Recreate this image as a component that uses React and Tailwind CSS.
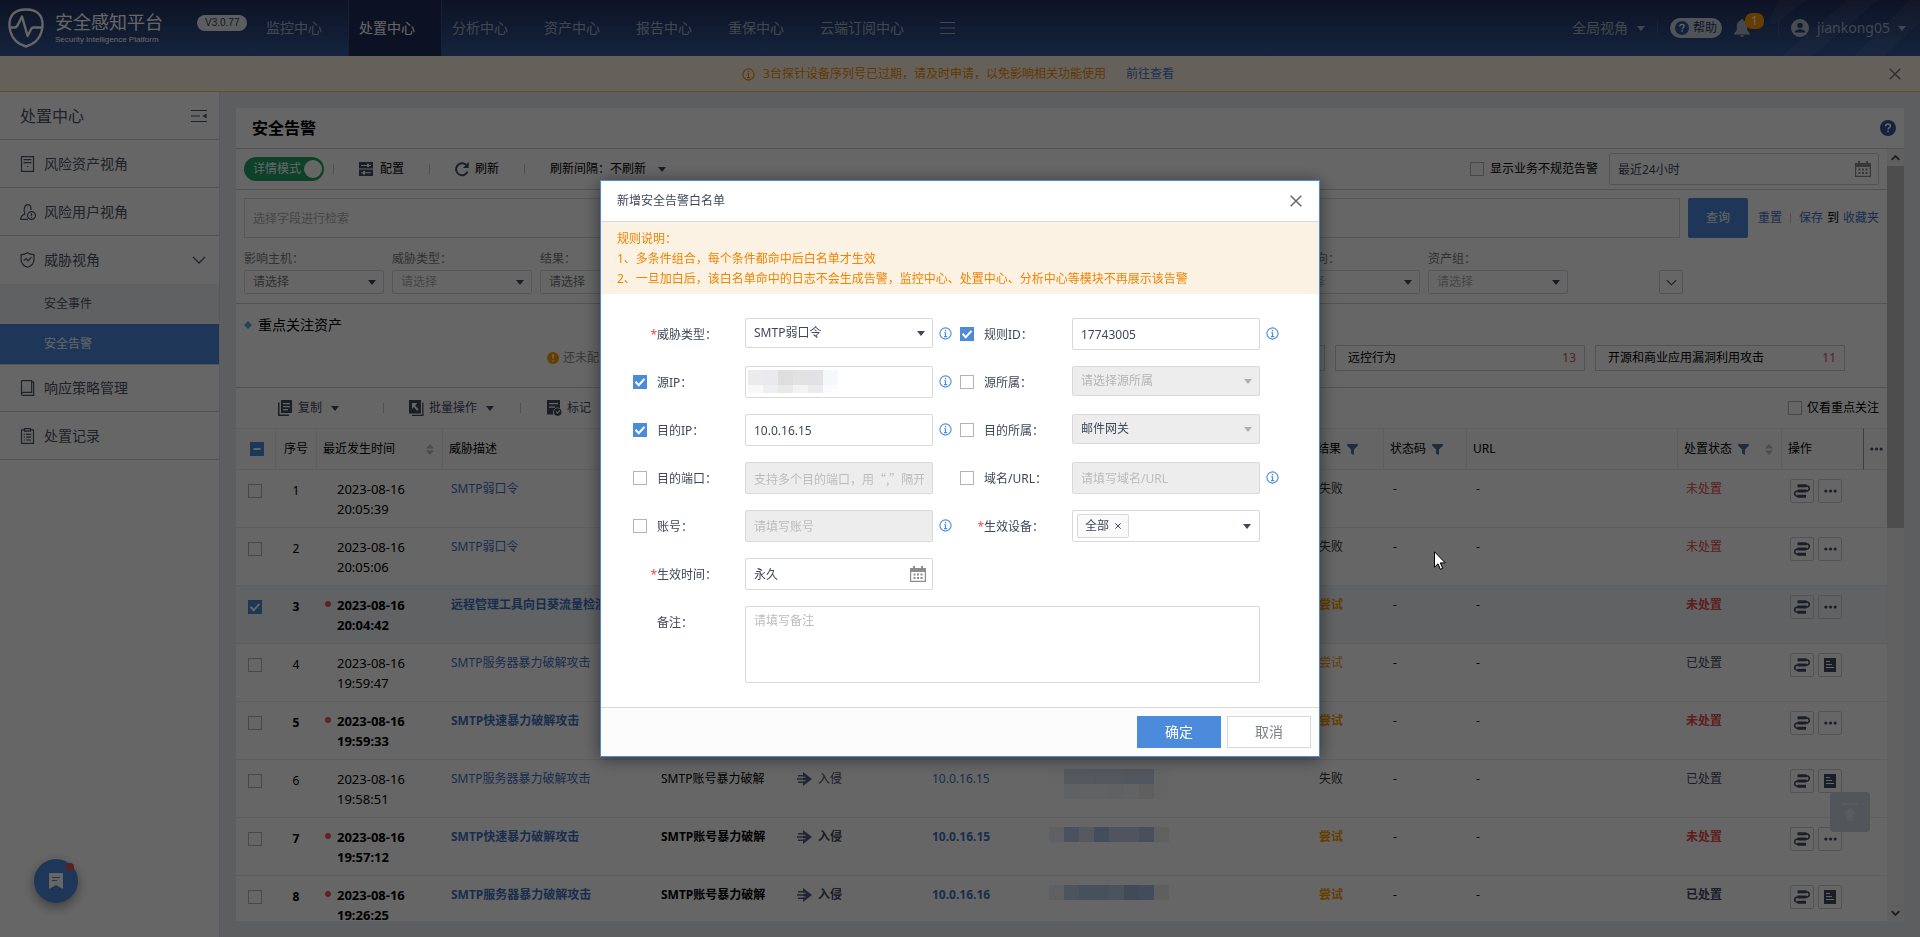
import React from 'react';

const FONT = "font-['Noto_Sans','Noto_Sans_CJK_SC',sans-serif]";

/* ---------- icons ---------- */

const Caret = ({ className = '' }) => (
  <svg viewBox="0 0 8 5" className={`w-2 h-[5px] shrink-0 fill-current ${className}`} aria-hidden="true">
    <path d="M0 0h8L4 5z" />
  </svg>
);

const Chevron = ({ className = '' }) => (
  <svg viewBox="0 0 14 8" className={`fill-none stroke-current ${className}`} strokeWidth="1.3" aria-hidden="true">
    <path d="M1 1l6 6 6-6" />
  </svg>
);

const CloseIcon = ({ className = 'w-3 h-3' }) => (
  <svg viewBox="0 0 12 12" className={`fill-none stroke-current ${className}`} strokeWidth="1.5" aria-hidden="true">
    <path d="M.7.7l10.6 10.6M11.3.7L.7 11.3" />
  </svg>
);

const InfoIcon = ({ className = '' }) => (
  <svg viewBox="0 0 14 14" className={`w-[13px] h-[13px] shrink-0 ${className}`} fill="none" stroke="currentColor" aria-hidden="true">
    <circle cx="7" cy="7" r="6" strokeWidth="1.2" />
    <path d="M5.6 6.2H7v4.2M5.4 10.4h3.4" strokeWidth="1.3" />
    <path d="M6.3 3.1h1.5v1.5H6.3z" fill="currentColor" stroke="none" />
  </svg>
);

const CalendarIcon = () => (
  <svg viewBox="0 0 16 16" className="w-4 h-4 fill-[#8c8c8c]" aria-hidden="true">
    <path d="M0 2h16v14H0zM1.200 6v8.800h13.600V6z" fillRule="evenodd" />
    <path d="M3 0h2v3H3zM11 0h2v3h-2z" />
    <path d="M3.500 7.500h2v2h-2zM7 7.500h2v2H7zM10.500 7.500h2v2h-2zM3.500 11h2v2h-2zM7 11h2v2H7zM10.500 11h2v2h-2z" />
  </svg>
);

const LogoIcon = () => (
  <svg viewBox="0 0 36 40" className="w-9 h-10 shrink-0" fill="none" stroke="#fff" strokeLinejoin="round" aria-hidden="true">
    <path d="M18 1.500c5 0 10 1.300 13 4.500 3.500 4 4.200 11 2.600 17.500C31.500 31.500 25 36.500 18 38.500 11 36.500 4.500 31.500 2.400 23.500.8 17 1.500 10 5 6 8 2.800 13 1.500 18 1.500z" strokeWidth="2.400" />
    <path d="M2.500 19.500h4.500c1.500 0 2-.8 2.600-2.200L14 8.500l5.600 19.500 3.600-7c.6-1.200 1.200-1.500 2.300-1.500H34" strokeWidth="2.400" />
  </svg>
);

const BellIcon = () => (
  <svg viewBox="0 0 16 18" className="w-4 h-[18px] fill-[#a9b4c8]" aria-hidden="true">
    <path d="M8 0c.9 0 1.400.6 1.400 1.400 2.400.7 3.800 2.800 3.800 5.300v4.600l2.800 3.400v.8H0v-.8l2.800-3.400V6.700c0-2.500 1.400-4.600 3.800-5.300C6.600.6 7.100 0 8 0zM6 16.300h4a2 1.700 0 0 1-4 0z" />
  </svg>
);

const UserIcon = () => (
  <svg viewBox="0 0 18 18" className="w-[18px] h-[18px]" aria-hidden="true">
    <circle cx="9" cy="9" r="9" fill="#b3bdcd" />
    <circle cx="9" cy="6.500" r="2.700" fill="#2b447c" />
    <path d="M3.800 13.600c0-2.200 2.400-3.300 5.200-3.300s5.200 1.100 5.200 3.300z" fill="#2b447c" />
  </svg>
);

const QuestionIcon = ({ className = '' }) => (
  <svg viewBox="0 0 16 16" className={className} fill="none" aria-hidden="true">
    <circle cx="8" cy="8" r="8" fill="#34569a" />
    <path d="M5.600 6.300c0-1.500 1-2.400 2.400-2.400s2.400.9 2.400 2.100c0 1.700-2.300 1.700-2.300 3.500" stroke="#fff" strokeWidth="1.500" />
    <path d="M7.200 10.700h1.700v1.600H7.200z" fill="#fff" />
  </svg>
);

const MenuIcon = () => (
  <svg viewBox="0 0 15 12" className="w-[15px] h-3 stroke-current" aria-hidden="true">
    <path d="M0 .5h15M0 6h15M0 11.500h15" />
  </svg>
);

const CollapseIcon = () => (
  <svg viewBox="0 0 16 12" className="w-4 h-3 stroke-current" aria-hidden="true">
    <path d="M0 .5h16M0 6h9M0 11.500h16" strokeWidth="1.200" fill="none" />
    <path d="M15.500 3.600v4.800L11.500 6z" fill="currentColor" stroke="none" />
  </svg>
);

const SideIcon = ({ name }) => (
  <svg viewBox="0 0 16 16" className="w-4 h-4 shrink-0 fill-none stroke-current" strokeWidth="1.200" aria-hidden="true">
    {name === 'asset' && <path d="M1.500.6h12v14.800h-12zM3.500 3.600h8M3.500 6.600h8M7 10.500h1.200" />}
    {name === 'user' && (
      <>
        <path d="M8 15.400H.7c0-3 1.300-4.300 4-5V8.500C3.600 7 4 .7 7.700.7c3.200 0 3.800 3.300 3 5.300" />
        <circle cx="11.500" cy="11.500" r="3.900" />
        <path d="M11.500 9.300v2.600M11.500 12.800v1" />
      </>
    )}
    {name === 'shield' && (
      <>
        <path d="M7.500.7c2 1.400 4 1.900 6.400 1.900V8c0 4-2.900 6-6.400 7.300C4 14 1.100 12 1.100 8V2.600c2.400 0 4.400-.5 6.400-1.900z" />
        <path d="M3.800 8.600l2.400-2 1.900 2.200 3.400-3.600" />
      </>
    )}
    {name === 'book' && <path d="M1.500.6h10.200v11.800H3.300c-1.200 0-1.800.7-1.800 1.500s.6 1.500 1.800 1.500h10.400V2.200h-2M1.500.6v13.300" />}
    {name === 'record' && <path d="M4.500 1.900h-3v13.500h12V1.900h-3M4.500.6h6v2.600h-6zM3.700 6.300h1.200M6 6.300h5.300M3.700 9.200h1.200M6 9.200h5.300M3.700 12h1.200M6 12h5.300" />}
  </svg>
);

const ToolIcon = ({ name }) => (
  <svg viewBox="0 0 15 16" className="w-[15px] h-4 shrink-0 fill-[#434c60]" aria-hidden="true">
    {name === 'config' && (
      <path fillRule="evenodd" d="M0 1h14v6.600H0zM0 8.400h14V15H0zM2 3.900v1h6v1.200h2V4.900h2v-1h-2V2.700H8v1.200zM2 11.200v1h2v1.200h2v-1.200h6v-1H6V10H4v1.200z" />
    )}
    {name === 'refresh' && (
      <>
        <path d="M12.600 10.700A6 6 0 1 1 11 3.700" fill="none" stroke="#434c60" strokeWidth="2" />
        <path d="M13.700.8v6.100H8z" />
      </>
    )}
    {name === 'copy' && (
      <path fillRule="evenodd" d="M3 0h11v13H3zM5 3v1.200h7V3zM5 6v1.200h7V6zM5 9v1.200h5V9zM0 2.500h1.500v12H11V16H0z" />
    )}
    {name === 'batch' && (
      <path fillRule="evenodd" d="M0 0h12v13.500H0zM3 3v6l1.900-1.900 3.300 3.700 1.500-1.400-3.400-3.600L8.200 3zM13.200 2.500h1.300V16H3v-1.300h10.200z" />
    )}
    {name === 'mark' && (
      <>
        <path fillRule="evenodd" d="M0 0h13v8.200a4.700 4.700 0 0 0-6.400 6.300H0zM2 3v1.300h9V3zM2 6.500v1.300h6V6.500z" />
        <path fillRule="evenodd" d="M10.700 8.300a3.800 3.800 0 1 1 0 7.600 3.800 3.800 0 0 1 0-7.600zm-2 3.700l1.700 1.800 3-3.100-.8-.8-2.200 2.300-.9-1z" />
      </>
    )}
  </svg>
);

const FunnelIcon = () => (
  <svg viewBox="0 0 11 11" className="w-[11px] h-[11px] fill-[#52719f]" aria-hidden="true">
    <path d="M0 0h11v1.500L7 5.500V11L4 9.500v-4L0 1.500z" />
  </svg>
);

const SortIcon = () => (
  <svg viewBox="0 0 8 11" className="w-2 h-[11px] fill-[#bdbdbd]" aria-hidden="true">
    <path d="M4 0l4 4.500H0zM4 11L0 6.500h8z" />
  </svg>
);

const FlowIcon = () => (
  <svg viewBox="0 0 16 14" className="w-4 h-[14px] text-[#434c60]" fill="none" stroke="currentColor" aria-hidden="true">
    <path d="M3.500 1.800h9" strokeWidth="3" />
    <path d="M3.500 7h9M3.500 12.300h8.500" strokeWidth="3" />
    <path d="M12 1.800c4.300 0 4.300 5.200 0 5.200M4 7C-.4 7-.4 12.300 4 12.300" strokeWidth="1.500" />
  </svg>
);

const DotsIcon = () => (
  <svg viewBox="0 0 14 4" className="w-[13px] h-1 fill-[#434c60]" aria-hidden="true">
    <circle cx="2" cy="2" r="1.700" />
    <circle cx="7" cy="2" r="1.700" />
    <circle cx="12" cy="2" r="1.700" />
  </svg>
);

const DocIcon = () => (
  <svg viewBox="0 0 12 14" className="w-3 h-[14px]" aria-hidden="true">
    <path d="M0 0h12v14H0z" fill="#434c60" />
    <path d="M2 3.500h4M2 6.500h6M2 9.500h8" stroke="#fff" />
  </svg>
);

const AttackIcon = () => (
  <svg viewBox="0 0 15 14" className="w-[15px] h-[14px] shrink-0" aria-hidden="true">
    <path d="M6 0l9 7-9 7z" fill="#52607f" />
    <path d="M5 5.200h3.500M5 8.800h3.500" stroke="#fff" strokeWidth="1.100" />
    <path d="M1 3.800h5M0 7h6M1 10.200h5" stroke="#52607f" strokeWidth="1.500" />
  </svg>
);

/* ---------- small controls ---------- */

const Check = ({ id, label, checked, mixed, className = '' }) => (
  <span className={`relative inline-block w-[14px] h-[14px] shrink-0 align-top ${className}`}>
    <input
      id={id}
      type="checkbox"
      aria-label={label}
      defaultChecked={checked || mixed}
      className="block w-[14px] h-[14px] appearance-none border border-[#b4b4b4] bg-white checked:bg-[#4c8bdb] checked:border-[#4c8bdb]"
    />
    {(checked || mixed) && (
      <svg viewBox="0 0 14 14" className="absolute inset-0 pointer-events-none" fill="none" stroke="#fff" strokeWidth="2" aria-hidden="true">
        <path d={mixed ? 'M3.500 7h7' : 'M2.500 6.800l3.200 3.400 5.800-6.400'} />
      </svg>
    )}
  </span>
);

const Select = ({ id, label, value, disabled, className = '', color = 'text-[#3f4759]' }) => (
  <span className={`relative block ${className}`}>
    <select
      id={id}
      aria-label={label}
      disabled={disabled}
      className={`block w-full h-full appearance-none rounded-[2px] border border-[#d9d9d9] px-2 text-xs opacity-100 ${
        disabled ? 'bg-[#ededed]' : 'bg-white'
      } ${color}`}
    >
      <option>{value}</option>
    </select>
    <span className={`absolute inset-y-0 right-2 flex items-center pointer-events-none ${disabled ? 'text-[#b0b0b0]' : 'text-[#3f4759]'}`}>
      <Caret />
    </span>
  </span>
);

const Divider = ({ className = '' }) => <span className={`w-px h-[10px] bg-[#c9c9c9] ${className}`} />;

/* ---------- page ---------- */

const navItems = ['监控中心', '处置中心', '分析中心', '资产中心', '报告中心', '重保中心', '云端订阅中心'];

const Header = () => (
  <header className="relative h-14 shrink-0 flex items-stretch bg-gradient-to-b from-[#22305c] to-[#345a9a] text-[#a4b1c8]">
    <svg viewBox="0 0 200 56" className="absolute right-0 top-0 w-[200px] h-14 fill-white/5" aria-hidden="true">
      <path d="M60 0h26L58 22q-8 6-8-4zM128 0h30L92 56H62zM190 0h10v22l-36 34h-30z" />
    </svg>
    <div className="flex items-center pl-2 w-[256px] shrink-0">
      <LogoIcon />
      <div className="ml-[11px] text-white">
        <div className="text-lg leading-6">安全感知平台</div>
        <div className="font-['Liberation_Sans',sans-serif] text-[8px] leading-3 whitespace-nowrap">Security Intelligence Platform</div>
      </div>
      <span className="ml-[34px] mb-[10px] h-4 px-2 rounded-full bg-[#e6e9ee] text-[#333c55] font-['Liberation_Sans',sans-serif] text-[10px] leading-4">
        V3.0.77
      </span>
    </div>
    <nav className="flex text-sm">
      {navItems.map((item) => (
        <a
          key={item}
          href="#"
          className={`flex items-center pl-[10px] pr-[26px] ${
            item === '处置中心' ? 'bg-[#1f2f58] border-x border-[#3a5284] text-white' : ''
          }`}
        >
          {item}
        </a>
      ))}
      <button type="button" aria-label="更多菜单" className="ml-[10px] text-[#a4b1c8]">
        <MenuIcon />
      </button>
    </nav>
    <div className="relative ml-auto flex items-center text-sm pr-[14px]">
      <button type="button" className="flex items-center gap-[9px]">
        全局视角 <Caret />
      </button>
      <span className="ml-3 w-px h-4 bg-[#3c5488]" />
      <button type="button" className="ml-3 h-5 w-[52px] rounded-full bg-[#c8cfdc] text-[#2a3a66] text-xs flex items-center justify-center gap-1">
        <QuestionIcon className="w-[14px] h-[14px]" />
        帮助
      </button>
      <button type="button" aria-label="消息" className="relative ml-3 mr-7">
        <BellIcon />
        <span className="absolute left-[11px] -top-[6px] w-[19px] h-4 rounded-[7px] bg-[#ff9800] text-white text-xs leading-4 text-center">1</span>
      </button>
      <span className="w-px h-4 bg-[#3c5488]" />
      <button type="button" className="ml-3 flex items-center gap-2">
        <UserIcon />
        jiankong05 <Caret />
      </button>
    </div>
  </header>
);

const Notice = () => (
  <div className="relative h-9 shrink-0 flex items-center justify-center pt-px pr-1 bg-[#fff1e0] border-b border-[#f5ce6e] text-xs text-[#f08c00]">
    <InfoIcon />
    <span className="ml-2">3台探针设备序列号已过期，请及时申请，以免影响相关功能使用</span>
    <a href="#" className="ml-5 text-[#3f78cf]">前往查看</a>
    <button type="button" aria-label="关闭提示" className="absolute right-[19px] text-[#777]">
      <CloseIcon />
    </button>
  </div>
);

const SideLink = ({ icon, children, className = '', open }) => (
  <a href="#" className={`h-12 pl-5 pr-[13px] flex items-center text-sm border-[#cfcfcf] ${className}`}>
    <SideIcon name={icon} />
    <span className="ml-2">{children}</span>
    {open && <Chevron className="ml-auto w-[14px] h-2" />}
  </a>
);

const Sidebar = () => (
  <aside className="relative w-[220px] shrink-0 bg-white border-r border-[#dcdfe4] text-[#4d5566]">
    <div className="h-12 pl-5 pr-3 flex items-center justify-between border-b border-[#cfcfcf]">
      <span className="text-base">处置中心</span>
      <CollapseIcon />
    </div>
    <SideLink icon="asset" className="border-b">风险资产视角</SideLink>
    <SideLink icon="user" className="border-b">风险用户视角</SideLink>
    <SideLink icon="shield" open>威胁视角</SideLink>
    <a href="#" className="h-10 pl-[44px] flex items-center text-xs bg-[#f0f2f5]">安全事件</a>
    <a href="#" className="h-10 pl-[44px] flex items-center text-xs bg-[#4c8bdb] text-white">安全告警</a>
    <SideLink icon="book" className="border-y">响应策略管理</SideLink>
    <SideLink icon="record" className="border-b">处置记录</SideLink>
    <button
      type="button"
      aria-label="书签"
      className="absolute left-[34px] bottom-[34px] w-11 h-11 rounded-full bg-[#4c8bdb] shadow-[0_4px_12px_rgba(0,0,0,0.4)] flex items-center justify-center"
    >
      <svg viewBox="0 0 14 16" className="w-[14px] h-4" aria-hidden="true">
        <path d="M0 0h14v16l-7-4-7 4z" fill="#fff" />
        <path d="M3 4.500h8M3 7.500h5" stroke="#4c8bdb" />
      </svg>
      <span className="absolute right-1 top-1 w-2 h-2 rounded-full bg-[#e84c4c]" />
    </button>
  </aside>
);

const filters = [
  ['影响主机', false],
  ['威胁类型', true],
  ['结果', false],
  ['威胁等级', true],
  ['处置状态', true],
  ['攻击阶段', true],
  ['源资产组', true],
  ['访问方向', true],
  ['资产组', true],
];

const FilterArea = () => (
  <section className="px-2 pt-2 pb-[9px] border-b border-[#cfcfcf]">
    <div className="flex items-center text-xs">
      <input
        aria-label="检索条件"
        placeholder="选择字段进行检索"
        className="flex-1 min-w-0 h-10 px-2 border border-[#d9d9d9] placeholder:text-[#b0b0b0]"
      />
      <button type="button" className="ml-2 w-[60px] h-10 rounded-[2px] bg-[#4c8bdb] text-white">查询</button>
      <a href="#" className="ml-[10px] text-[#3f72c4]">重置</a>
      <Divider className="mx-2" />
      <a href="#" className="text-[#3f72c4]">保存</a>
      <span className="mx-1">到</span>
      <a href="#" className="text-[#3f72c4]">收藏夹</a>
    </div>
    <div className="mt-3 flex items-end gap-2">
      {filters.map(([name, muted]) => (
        <label key={name} className="w-[140px] shrink-0 text-xs leading-[18px] text-[#7b7b7b]">
          <span className="block h-5">{name}：</span>
          <Select value="请选择" color={muted ? 'text-[#b0b0b0]' : 'text-[#757575]'} className="h-6" />
        </label>
      ))}
      <button type="button" aria-label="展开" className="ml-[83px] w-6 h-6 border border-[#cfcfcf] rounded-[2px] flex items-center justify-center text-[#444]">
        <Chevron className="w-[11px] h-[7px]" />
      </button>
    </div>
  </section>
);

const FocusAssets = () => (
  <section className="h-[84px] border-b border-[#cfcfcf]">
    <h2 className="h-[41px] pl-2 flex items-center text-sm">
      <svg viewBox="0 0 8 8" className="w-2 h-2 mr-[6px] fill-[#54aee0]" aria-hidden="true">
        <path d="M4 0l4 4-4 4-4-4z" />
      </svg>
      重点关注资产
    </h2>
    <div className="flex items-center justify-between pl-[311px] pr-[42px] text-xs">
      <span className="flex items-center text-[#8b8b8b]">
        <svg viewBox="0 0 12 12" className="w-3 h-3 mr-1" aria-hidden="true">
          <circle cx="6" cy="6" r="6" fill="#ff9c00" />
          <path d="M5 2.200h2l-.4 4.600H5.400zM5.200 8h1.600v1.500H5.200z" fill="#fff" />
        </svg>
        还未配置重点关注资产
      </span>
      <ul className="flex gap-[10px]">
        {[['暴力破解', 25], ['远控行为', 13], ['开源和商业应用漏洞利用攻击', 11]].map(([name, count]) => (
          <li key={name} className="w-[250px] h-[26px] pl-3 pr-2 flex items-center justify-between border border-[#cfcfcf]">
            {name}
            <span className="text-[#e84c4c]">{count}</span>
          </li>
        ))}
      </ul>
    </div>
  </section>
);

const TableTools = () => (
  <div className="h-10 pl-[42px] pr-2 flex items-center text-xs text-[#434c60]">
    <button type="button" className="w-20 flex items-center">
      <ToolIcon name="copy" />
      <span className="ml-[5px] mr-[9px]">复制</span>
      <Caret />
    </button>
    <Divider className="mx-[25px]" />
    <button type="button" className="flex items-center">
      <ToolIcon name="batch" />
      <span className="ml-[5px] mr-[9px]">批量操作</span>
      <Caret />
    </button>
    <Divider className="mx-[26px]" />
    <button type="button" className="flex items-center">
      <ToolIcon name="mark" />
      <span className="ml-[5px]">标记</span>
    </button>
    <label className="ml-auto flex items-center gap-[5px] text-black">
      <Check />
      仅看重点关注
    </label>
  </div>
);

// background tints of the masked host cells, 8 per line
const masks = {
  6: [
    '#fcfcfe', '#d4ddee', '#d4ddee', '#d0daec', '#d0daec', '#cdd6ea', '#cdd6ea', '#fafafa',
    '#ffffff', '#f0f3f5', '#f2f5f7', '#f2f5f7', '#f0f3f5', '#f4f7fa', '#eeeeee', '#fafafa',
  ],
  7: ['#eaeffa', '#bccce8', '#d8e0f0', '#a9c0e4', '#c8d3ea', '#c8d3ea', '#b8c7e4', '#f0f0f0'],
  8: ['#eaeffa', '#c3d3ec', '#b2c8e8', '#b2c8e8', '#bccfea', '#a2bade', '#a8bee2', '#eeeeee'],
};

const rows = [
  { n: 1, time: '20:05:39', name: 'SMTP弱口令', type: '弱口令', ip: '10.0.16.15', result: '失败', state: '未处置' },
  { n: 2, time: '20:05:06', name: 'SMTP弱口令', type: '弱口令', ip: '10.0.16.15', result: '失败', state: '未处置' },
  { n: 3, time: '20:04:42', name: '远程管理工具向日葵流量检测', type: '远控行为', ip: '10.0.16.15', result: '尝试', state: '未处置', bold: true, checked: true },
  { n: 4, time: '19:59:47', name: 'SMTP服务器暴力破解攻击', type: 'SMTP账号暴力破解', ip: '10.0.16.15', result: '尝试', state: '已处置' },
  { n: 5, time: '19:59:33', name: 'SMTP快速暴力破解攻击', type: 'SMTP账号暴力破解', ip: '10.0.16.15', result: '尝试', state: '未处置', bold: true },
  { n: 6, time: '19:58:51', name: 'SMTP服务器暴力破解攻击', type: 'SMTP账号暴力破解', ip: '10.0.16.15', result: '失败', state: '已处置' },
  { n: 7, time: '19:57:12', name: 'SMTP快速暴力破解攻击', type: 'SMTP账号暴力破解', ip: '10.0.16.15', result: '尝试', state: '未处置', bold: true },
  { n: 8, time: '19:26:25', name: 'SMTP服务器暴力破解攻击', type: 'SMTP账号暴力破解', ip: '10.0.16.16', result: '尝试', state: '已处置', bold: true },
];

const Th = ({ children, className = '' }) => (
  <th className={`h-[42px] pl-[6px] border-y border-r border-[#ececec] bg-[#fcfcfc] font-normal text-left whitespace-nowrap ${className}`}>
    <div className="flex items-center gap-[6px]">{children}</div>
  </th>
);

const AlarmTable = () => (
  <table className="w-full table-fixed border-separate border-spacing-0 text-xs leading-5 text-black">
    <colgroup>
      <col className="w-10" />
      <col className="w-[41px]" />
      <col className="w-[126px]" />
      <col className="w-[210px]" />
      <col className="w-[136px]" />
      <col className="w-[135px]" />
      <col className="w-[125px]" />
      <col className="w-[126px]" />
      <col className="w-[136px]" />
      <col className="w-[73px]" />
      <col className="w-[83px]" />
      <col />
      <col className="w-[104px]" />
      <col className="w-[82px]" />
      <col className="w-[23px]" />
    </colgroup>
    <thead>
      <tr>
        <Th><Check label="全选" mixed className="ml-2" /></Th>
        <Th><span className="ml-[2px]">序号</span></Th>
        <Th>最近发生时间 <span className="ml-auto mr-2"><SortIcon /></span></Th>
        <Th>威胁描述</Th>
        <Th>威胁类型</Th>
        <Th>攻击阶段</Th>
        <Th>目的IP</Th>
        <Th>源IP</Th>
        <Th>数据来源</Th>
        <Th>结果 <FunnelIcon /></Th>
        <Th>状态码 <FunnelIcon /></Th>
        <Th>URL</Th>
        <Th>处置状态 <FunnelIcon /> <span className="ml-auto mr-2"><SortIcon /></span></Th>
        <Th className="border-r-[#9a9a9a]">操作</Th>
        <Th className="border-r-0"><DotsIcon /></Th>
      </tr>
    </thead>
    <tbody>
      {rows.map((row) => (
        <tr
          key={row.n}
          className={`[&>td]:h-[58px] [&>td]:pt-[9px] [&>td]:pl-2 [&>td]:align-top [&>td]:border-b [&>td]:border-[#ececec] [&>td]:whitespace-nowrap ${
            row.bold ? 'font-bold' : ''
          } ${row.checked ? 'bg-[#f1f4f9]' : ''}`}
        >
          <td><Check label={`选择第${row.n}行`} checked={row.checked} className="mt-[5px] ml-1" /></td>
          <td><div className="w-6 mt-[2px] text-center">{row.n}</div></td>
          <td>
            <div className="flex text-[13px]">
              <span className="w-3">
                {row.bold && <span className="block w-[6px] h-[6px] mt-[6px] rounded-full bg-[#ef5350]" />}
              </span>
              <span>2023-08-16<br />{row.time}</span>
            </div>
          </td>
          <td className="overflow-hidden text-[#3f72c4]">{row.name}</td>
          <td>{row.type}</td>
          <td>
            <div className="flex items-center gap-[6px] text-[#434c60]"><AttackIcon />入侵</div>
          </td>
          <td className="text-[#3f72c4]">{row.ip}</td>
          <td>
            {masks[row.n] && (
              <div className="-ml-2 w-[120px] grid grid-cols-8">
                {masks[row.n].map((color, i) => (
                  <span key={i} className="h-[15px]" style={{ backgroundColor: color }} />
                ))}
              </div>
            )}
          </td>
          <td></td>
          <td className={row.result === '尝试' ? 'text-[#ff9800]' : 'text-[#333]'}>{row.result}</td>
          <td><span className="ml-px font-normal">-</span></td>
          <td><span className="ml-px font-normal">-</span></td>
          <td className={row.state === '未处置' ? 'text-[#e84c4c]' : 'text-[#434c60]'}>{row.state}</td>
          <td colSpan={2}>
            <div className="flex gap-1">
              <button type="button" aria-label="处置流程" className="w-6 h-6 flex items-center justify-center border border-[#cfcfcf] rounded-[2px]">
                <FlowIcon />
              </button>
              <button type="button" aria-label="更多" className="w-6 h-6 flex items-center justify-center border border-[#cfcfcf] rounded-[2px]">
                {row.state === '未处置' ? <DotsIcon /> : <DocIcon />}
              </button>
            </div>
          </td>
        </tr>
      ))}
    </tbody>
  </table>
);

const ScrollBar = () => (
  <div className="w-[17px] shrink-0 flex flex-col bg-[#f1f1f1] text-[#505050]">
    <div className="h-[17px] flex items-center justify-center">
      <Chevron className="w-[9px] h-[6px] rotate-180 stroke-[3]" />
    </div>
    <div className="flex-1"><div className="h-[49%] bg-[#c1c1c1]" /></div>
    <div className="h-[17px] flex items-center justify-center">
      <Chevron className="w-[9px] h-[6px] stroke-[3]" />
    </div>
  </div>
);

const Main = () => (
  <main className="flex-1 min-w-0 p-4 bg-[#e8eaee] flex">
    <div className="relative flex-1 min-w-0 flex flex-col bg-white rounded-[2px]">
      <div className="h-[41px] shrink-0 pl-4 pr-2 flex items-center justify-between border-b border-[#cfcfcf]">
        <h1 className="text-base font-bold">安全告警</h1>
        <button type="button" aria-label="帮助"><QuestionIcon className="w-4 h-4" /></button>
      </div>
      <div className="flex-1 min-h-0 flex">
        <div className="flex-1 min-w-0 overflow-hidden">
          <div className="h-[41px] px-2 flex items-center text-xs border-b border-[#cfcfcf]">
            <button type="button" role="switch" aria-checked="true" className="w-20 h-6 pl-[9px] pr-[2px] rounded-full bg-[#22a26a] text-white flex items-center justify-between mr-[9px]">
              详情模式
              <span className="w-[18px] h-[18px] rounded-full bg-white" />
            </button>
            <Divider />
            <button type="button" className="mx-[25px] flex items-center gap-[6px]"><ToolIcon name="config" />配置</button>
            <Divider />
            <button type="button" className="mx-[25px] flex items-center gap-[5px]"><ToolIcon name="refresh" />刷新</button>
            <Divider />
            <label className="ml-[25px] flex items-center">
              刷新间隔：
              <span className="relative flex items-center">
                <select className="appearance-none w-14 h-6"><option>不刷新</option></select>
                <Caret className="absolute right-0 text-[#434c60]" />
              </span>
            </label>
            <label className="ml-auto mr-[11px] flex items-center gap-[6px]">
              <Check />
              显示业务不规范告警
            </label>
            <div className="relative w-[270px]">
              <input aria-label="时间范围" defaultValue="最近24小时" className="w-full h-8 px-2 border border-[#d0d0d0] rounded-[2px] text-[#434c60]" />
              <span className="absolute right-2 top-2"><CalendarIcon /></span>
            </div>
          </div>
          <FilterArea />
          <FocusAssets />
          <TableTools />
          <AlarmTable />
        </div>
        <ScrollBar />
      </div>
      <button
        type="button"
        aria-label="回到顶部"
        className="absolute right-[34px] bottom-[89px] w-10 h-10 rounded-[4px] bg-[#cdd6e4] flex items-center justify-center"
      >
        <svg viewBox="0 0 16 18" className="w-4 h-[18px] fill-[#dde4ee]" aria-hidden="true">
          <path d="M0 0h16v2H0zM8 4l6.500 7H11v7H5v-7H1.500z" />
        </svg>
      </button>
    </div>
  </main>
);

/* ---------- dialog ---------- */

const inputClass =
  'block w-full h-8 px-2 rounded-[2px] border border-[#d9d9d9] bg-white text-xs text-[#3f4759] placeholder:text-[#bcbcbc] disabled:bg-[#ededed]';

// one form cell: tick box (or required star), label, control and info mark
const Field = ({ id, label, required, ticked, info, children }) => (
  <div className="grid grid-cols-[24px_88px_188px_27px] h-8">
    <span className="pt-[9px] text-right">
      {required ? (
        <span className="block leading-4 text-[#e84c4c]">*</span>
      ) : (
        <Check label={`启用${label}`} checked={ticked} className="float-left" />
      )}
    </span>
    <label htmlFor={id} className="leading-[33px]">{label}：</label>
    {children}
    <span className="pt-[9px] pl-[6px] text-[#4c8bdb]">{info && <InfoIcon />}</span>
  </div>
);

const Dialog = () => (
  <div className="fixed inset-0 bg-black/60 flex items-center justify-center">
    <form
      role="dialog"
      aria-label="新增安全告警白名单"
      onSubmit={(e) => e.preventDefault()}
      className="w-[720px] bg-white border border-[#4c8bdb] text-xs text-[#3f4759] shadow-[0_2px_16px_rgba(0,0,0,0.5)]"
    >
      <div className="h-[41px] px-4 flex items-center justify-between border-b border-[#d9d9d9]">
        <h2>新增安全告警白名单</h2>
        <button type="button" aria-label="关闭" className="mr-px text-[#666]"><CloseIcon /></button>
      </div>
      <div className="px-4 pt-[7px] pb-[5px] bg-[#fcf2e3] text-[#f08300] leading-5">
        <p>规则说明：</p>
        <p>1、多条件组合，每个条件都命中后白名单才生效</p>
        <p>2、一旦加白后，该白名单命中的日志不会生成告警，监控中心、处置中心、分析中心等模块不再展示该告警</p>
      </div>
      <div className="pt-6 px-8 pb-6 grid grid-cols-[327px_327px] gap-y-4">
        <Field id="threat" label="威胁类型" required info>
          <Select id="threat" value="SMTP弱口令" className="h-[30px]" />
        </Field>
        <Field id="rule" label="规则ID" ticked info>
          <input id="rule" defaultValue="17743005" className={inputClass} />
        </Field>
        <Field id="src" label="源IP" ticked info>
          <span className="relative block">
            <input id="src" className={inputClass} />
            <span className="absolute left-[3px] top-1 w-[90px] grid grid-cols-6 pointer-events-none">
              {['#ebebee', '#e9e9ef', '#dedede', '#e2e2e3', '#e2e2e4', '#f6f7fa'].map((c, i) => (
                <span key={i} className="h-[15px]" style={{ backgroundColor: c }} />
              ))}
              {['#f8f8f8', '#eeeff2', '#e9e9ea', '#f3f3f4', '#eaebed', '#fafcff'].map((c, i) => (
                <span key={i} className="h-2" style={{ backgroundColor: c }} />
              ))}
            </span>
          </span>
        </Field>
        <Field id="srcOwner" label="源所属">
          <Select id="srcOwner" value="请选择源所属" disabled color="text-[#b5b5b5]" className="h-[30px]" />
        </Field>
        <Field id="dst" label="目的IP" ticked info>
          <input id="dst" defaultValue="10.0.16.15" className={inputClass} />
        </Field>
        <Field id="dstOwner" label="目的所属">
          <Select id="dstOwner" value="邮件网关" disabled className="h-[30px]" />
        </Field>
        <Field id="port" label="目的端口">
          <input
            id="port"
            lang="zh-CN"
            disabled
            placeholder="支持多个目的端口，用“,”隔开"
            className={`${inputClass} font-['Noto_Sans_CJK_SC',sans-serif]`}
          />
        </Field>
        <Field id="domain" label="域名/URL" info>
          <input id="domain" disabled placeholder="请填写域名/URL" className={inputClass} />
        </Field>
        <Field id="account" label="账号" info>
          <input id="account" disabled placeholder="请填写账号" className={inputClass} />
        </Field>
        <Field id="device" label="生效设备" required>
          <div id="device" role="group" aria-label="生效设备" className="h-8 pl-1 pr-2 flex items-center justify-between border border-[#d9d9d9] rounded-[2px]">
            <span className="h-6 w-[52px] flex items-center justify-center gap-[6px] border border-[#d9d9d9] bg-[#fafafa] rounded-[2px]">
              全部
              <button type="button" aria-label="移除全部">
                <CloseIcon className="w-[6px] h-[6px] stroke-2" />
              </button>
            </span>
            <Caret />
          </div>
        </Field>
        <Field id="period" label="生效时间" required>
          <span className="relative block">
            <input id="period" defaultValue="永久" className={inputClass} />
            <span className="absolute right-[7px] top-2"><CalendarIcon /></span>
          </span>
        </Field>
        <div className="col-span-2 grid grid-cols-[24px_88px_515px]">
          <span />
          <label htmlFor="remark" className="leading-[33px]">备注：</label>
          <textarea
            id="remark"
            placeholder="请填写备注"
            className="block h-[77px] px-2 py-[6px] resize-none rounded-[2px] border border-[#d9d9d9] placeholder:text-[#bcbcbc]"
          />
        </div>
      </div>
      <div className="h-[49px] px-2 flex items-center justify-end gap-[6px] border-t border-[#d9d9d9] bg-[#fcfcfc] text-sm">
        <button type="submit" className="w-[84px] h-8 bg-[#4c8bdb] text-white">确定</button>
        <button type="button" className="w-[84px] h-8 border border-[#d9d9d9] bg-white text-[#7d8088]">取消</button>
      </div>
    </form>
  </div>
);

const Cursor = () => (
  <svg viewBox="0 0 12 19" className="fixed left-[1434px] top-[551px] w-3 h-[19px]" aria-hidden="true">
    <path d="M.5.8v15.400l3.500-3.400 2.400 5.500 2.300-1-2.400-5.400h5z" fill="#fff" stroke="#000" />
  </svg>
);

export default function App() {
  return (
    <div className={`h-screen flex flex-col overflow-hidden text-black ${FONT}`}>
      <Header />
      <Notice />
      <div className="flex-1 min-h-0 flex">
        <Sidebar />
        <Main />
      </div>
      <Dialog />
      <Cursor />
    </div>
  );
}
